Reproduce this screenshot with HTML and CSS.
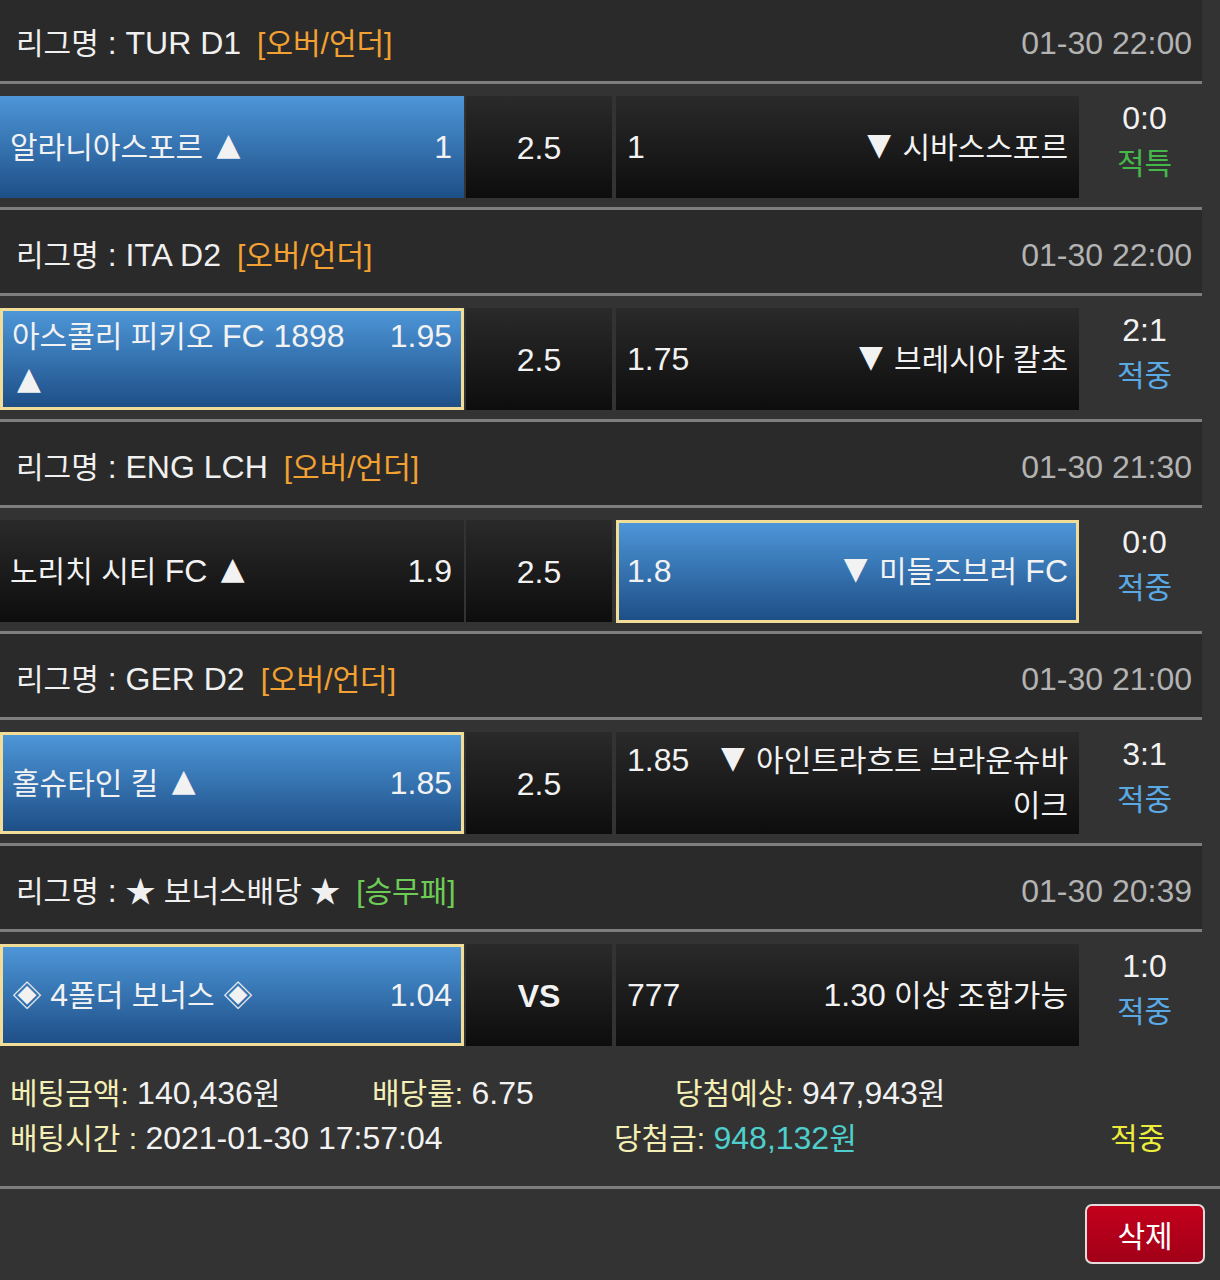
FILE: index.html
```html
<!DOCTYPE html>
<html lang="ko">
<head>
<meta charset="utf-8">
<title>배팅내역</title>
<link rel="stylesheet" href="styles.css">
</head>
<body>
<div class="list">
  <div class="block">
    <div class="league"><div class="lname">리그명<span class="n"> : TUR D1</span><span class="tag ou">[오버/언더]</span></div><div class="ltime">01-30 22:00</div></div>
    <div class="row">
      <div class="cell home blue"><div class="inner"><span class="name">알라니아스포르 <span class="tri up">▲</span></span><span class="odds">1</span></div></div>
      <div class="cell mid">2.5</div>
      <div class="cell away dark"><div class="inner"><span class="odds">1</span><span class="name"><span class="tri dn">▼</span> 시바스스포르</span></div></div>
      <div class="result"><div class="score">0:0</div><div class="st spec">적특</div></div>
    </div>
  </div>
  <div class="block">
    <div class="league"><div class="lname">리그명<span class="n"> : ITA D2</span><span class="tag ou">[오버/언더]</span></div><div class="ltime">01-30 22:00</div></div>
    <div class="row">
      <div class="cell home blue sel"><div class="inner"><span class="name">아스콜리 피키오 <span class="n">FC 1898</span> <span class="tri up">▲</span></span><span class="odds">1.95</span></div></div>
      <div class="cell mid">2.5</div>
      <div class="cell away dark"><div class="inner"><span class="odds">1.75</span><span class="name"><span class="tri dn">▼</span> 브레시아 칼초</span></div></div>
      <div class="result"><div class="score">2:1</div><div class="st hit">적중</div></div>
    </div>
  </div>
  <div class="block">
    <div class="league"><div class="lname">리그명<span class="n"> : ENG LCH</span><span class="tag ou">[오버/언더]</span></div><div class="ltime">01-30 21:30</div></div>
    <div class="row">
      <div class="cell home dark"><div class="inner"><span class="name">노리치 시티 <span class="n">FC</span> <span class="tri up">▲</span></span><span class="odds">1.9</span></div></div>
      <div class="cell mid">2.5</div>
      <div class="cell away blue sel"><div class="inner"><span class="odds">1.8</span><span class="name"><span class="tri dn">▼</span> 미들즈브러 <span class="n">FC</span></span></div></div>
      <div class="result"><div class="score">0:0</div><div class="st hit">적중</div></div>
    </div>
  </div>
  <div class="block">
    <div class="league"><div class="lname">리그명<span class="n"> : GER D2</span><span class="tag ou">[오버/언더]</span></div><div class="ltime">01-30 21:00</div></div>
    <div class="row">
      <div class="cell home blue sel"><div class="inner"><span class="name">홀슈타인 킬 <span class="tri up">▲</span></span><span class="odds">1.85</span></div></div>
      <div class="cell mid">2.5</div>
      <div class="cell away dark"><div class="inner"><span class="odds">1.85</span><span class="name"><span class="tri dn">▼</span> 아인트라흐트 브라운슈바이크</span></div></div>
      <div class="result"><div class="score">3:1</div><div class="st hit">적중</div></div>
    </div>
  </div>
  <div class="block">
    <div class="league"><div class="lname">리그명<span class="n"> : </span>★ 보너스배당 ★<span class="tag wdl">[승무패]</span></div><div class="ltime">01-30 20:39</div></div>
    <div class="row">
      <div class="cell home blue sel"><div class="inner"><span class="name">◈ <span class="n">4</span>폴더 보너스 ◈</span><span class="odds">1.04</span></div></div>
      <div class="cell mid vs">VS</div>
      <div class="cell away dark"><div class="inner"><span class="odds">777</span><span class="name"><span class="n">1.30</span> 이상 조합가능</span></div></div>
      <div class="result"><div class="score">1:0</div><div class="st hit">적중</div></div>
    </div>
  </div>
</div>
<div class="summary">
  <div class="sline">
    <span class="s1"><span class="lbl">베팅금액:</span> <span class="n">140,436</span>원</span>
    <span class="s2"><span class="lbl">배당률:</span> <span class="n">6.75</span></span>
    <span class="s3"><span class="lbl">당첨예상:</span> <span class="n">947,943</span>원</span>
  </div>
  <div class="sline">
    <span class="t1"><span class="lbl">배팅시간 :</span> <span class="n">2021-01-30 17:57:04</span></span>
    <span class="t2"><span class="lbl">당첨금:</span> <span class="win"><span class="n">948,132</span>원</span></span>
    <span class="t3 ok">적중</span>
  </div>
</div>
<div class="footer"><button class="del" type="button">삭제</button></div>
</body>
</html>
```

FILE: styles.css
```css
* { box-sizing: border-box; }
html, body { margin: 0; padding: 0; }
body {
  background: #333333;
  color: #f2f2f2;
  font-family: "Liberation Sans", "Noto Sans CJK KR", sans-serif;
  font-size: 30px;
  line-height: 45px;
  overflow: hidden;
  height: 1280px;
}
.n, .ltime, .odds, .mid, .score { font-size: 32px; }
.tri {
  font-family: "DejaVu Sans", sans-serif;
  font-size: 31px;
  line-height: 1;
  vertical-align: 3px;
}
.tri.up { margin-left: 5px; }
.tri.dn { margin-right: 3px; }
.list { width: 1202px; margin-top: -5px; }
.block { padding-bottom: 9px; }
.league {
  height: 89px;
  background: #2a2a2a;
  border-top: 3px solid #7e7e7e;
  border-bottom: 3px solid #7e7e7e;
  display: flex;
  align-items: center;
  justify-content: space-between;
  padding: 7px 10px 0 16px;
}
.lname { color: #f0f0f0; }
.tag { margin-left: 16px; }
.ou { color: #f2a132; }
.wdl { color: #6dcc55; }
.ltime { color: #b3b3b3; }
.row {
  display: flex;
  margin-top: 12px;
  height: 102px;
}
.cell { height: 102px; display: flex; align-items: center; }
.home { width: 464px; padding: 0 12px 0 10px; }
.mid { width: 146px; margin-left: 2px; justify-content: center; padding-top: 3px; }
.away { width: 463px; margin-left: 4px; padding: 0 11px; }
.vs { font-weight: bold; }
.blue { background: linear-gradient(#4d96d8, #1e4f87); }
.dark, .mid { background: linear-gradient(#2a2a2a, #0d0d0d); }
.sel { border: 3px solid #f1dd98; }
.home.sel { padding: 0 9px 0 9px; }
.away.sel { padding: 0 8px; height: 103px; }
.inner { display: flex; align-items: flex-start; width: 100%; }
.home .name { flex: 1; text-align: left; padding-right: 20px; }
.home .odds { flex: none; }
.away .odds { flex: none; }
.away .name { flex: 1; text-align: right; padding-left: 14px; }
.result {
  width: 113px;
  margin-left: 9px;
  text-align: center;
  align-self: flex-start;
}
.st.spec { color: #45b84a; }
.st.hit { color: #5aa9e4; }
.summary { padding: 16px 0 25px 10px; }
.sline { display: flex; }
.lbl { color: #f4efb4; }
.s1 { width: 362px; }
.s2 { width: 303px; }
.t1 { width: 604px; }
.t2 { width: 496px; }
.win { color: #4ecfcd; }
.ok { color: #ecec3c; }
.footer {
  border-top: 3px solid #7e7e7e;
  display: flex;
  justify-content: flex-end;
  padding: 15px 15px 0 0;
}
.del {
  width: 120px;
  height: 60px;
  border: 2px solid #e4dcdc;
  border-radius: 7px;
  background: linear-gradient(#c4001c, #a10018);
  color: #ffffff;
  font-family: "Liberation Sans", "Noto Sans CJK KR", sans-serif;
  font-size: 30px;
  padding: 0;
}
```
